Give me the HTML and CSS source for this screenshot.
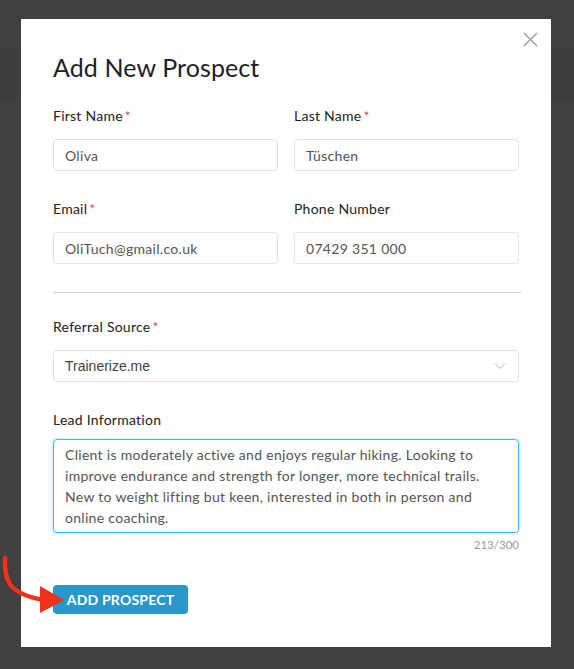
FILE: index.html
```html
<!DOCTYPE html>
<html lang="en">
<head>
<meta charset="utf-8">
<title>Add New Prospect</title>
<link rel="stylesheet" href="styles.css">
</head>
<body>
<div class="modal">
  <button class="close" aria-label="Close">
    <svg width="15" height="15" viewBox="0 0 15 15"><path d="M1 1L14 14M14 1L1 14" stroke="#9a9a9a" stroke-width="1.4" fill="none"/></svg>
  </button>
  <h1 class="title">Add New Prospect</h1>
  <div class="grid">
    <div class="field">
      <label class="label">First Name<span class="req">*</span></label>
      <div class="input">Oliva</div>
    </div>
    <div class="field">
      <label class="label">Last Name<span class="req">*</span></label>
      <div class="input">Tüschen</div>
    </div>
    <div class="field">
      <label class="label">Email<span class="req">*</span></label>
      <div class="input">OliTuch@gmail.co.uk</div>
    </div>
    <div class="field">
      <label class="label">Phone Number</label>
      <div class="input">07429 351 000</div>
    </div>
  </div>
  <hr class="divider">
  <div class="field">
    <label class="label">Referral Source<span class="req">*</span></label>
    <div class="input select">
      <span>Trainerize.me</span>
      <svg width="12" height="8" viewBox="0 0 12 8"><path d="M1 1.5L6 6.5L11 1.5" stroke="#b5b5b5" stroke-width="1" fill="none"/></svg>
    </div>
  </div>
  <div class="field lead">
    <label class="label">Lead Information</label>
    <div class="textarea">Client is moderately active and enjoys regular hiking. Looking to improve endurance and strength for longer, more technical trails. New to weight lifting but keen, interested in both in person and online coaching.</div>
    <div class="counter">213/300</div>
  </div>
  <button class="submit">ADD PROSPECT</button>
</div>
<svg class="arrow" width="70" height="80" viewBox="0 0 70 80">
  <path d="M5 8 C4 30 8 44 44 50" stroke="#f0321a" stroke-width="4.5" fill="none" stroke-linecap="round"/>
  <path d="M40 36 L64 50 L40 63 Z" fill="#f0321a"/>
</svg>
</body>
</html>
```
FILE: styles.css
```css
* { box-sizing: border-box; }
html, body { margin: 0; padding: 0; }
body {
  width: 574px;
  height: 669px;
  overflow: hidden;
  position: relative;
  background: linear-gradient(#404040 0, #404040 50px, #3c3e40 50px, #3c3e40 100px, #404040 100px);
  font-family: "Lato", "Open Sans", sans-serif;
  padding: 19px 0 0 21px;
}
.modal {
  position: relative;
  width: 530px;
  height: 628px;
  background: #fff;
  padding: 32px 32px 0 32px;
}
.close {
  position: absolute;
  top: 13px;
  right: 13px;
  width: 15px;
  height: 15px;
  padding: 0;
  border: 0;
  background: none;
  display: flex;
}
.title {
  margin: 0 0 23px 0;
  font-size: 25px;
  line-height: 32px;
  font-weight: 400;
  color: #1e1e1e;
  letter-spacing: 0.1px;
}
.grid {
  display: grid;
  grid-template-columns: 225px 225px;
  column-gap: 16px;
  row-gap: 28px;
}
.label {
  display: block;
  font-size: 14px;
  line-height: 20px;
  color: #222;
  margin-bottom: 13px;
  letter-spacing: 0.25px;
}
.req { color: #e5484d; margin-left: 2px; }
.input {
  height: 32px;
  border: 1px solid #e2e2e2;
  border-radius: 4px;
  padding: 0 11px;
  display: flex;
  align-items: center;
  font-size: 14px;
  color: #555;
  letter-spacing: 0.3px;
}
.divider {
  margin: 28px 0 24px 0;
  border: 0;
  border-top: 1px solid #cfcfcf;
  width: 468px;
}
.select {
  width: 466px;
  justify-content: space-between;
  font-family: "Liberation Sans", Arial, sans-serif;
  color: #444;
  padding-right: 12px;
  letter-spacing: 0;
}
.lead { margin-top: 28px; }
.lead .label { margin-bottom: 9px; }
.textarea {
  width: 466px;
  height: 94px;
  border: 1px solid #3fb6ef;
  border-radius: 4px;
  box-shadow: 0 0 3px rgba(63, 182, 239, 0.45);
  padding: 4px 11px;
  font-size: 14px;
  line-height: 21px;
  color: #555;
  letter-spacing: 0.3px;
}
.counter {
  width: 466px;
  text-align: right;
  font-size: 11.5px;
  line-height: 14px;
  color: #999;
  margin-top: 5px;
}
.submit {
  display: block;
  margin-top: 33px;
  width: 135px;
  height: 29px;
  border: 0;
  border-radius: 4px;
  background: #2a97cc;
  color: #fff;
  font-family: "Lato", sans-serif;
  font-weight: 700;
  font-size: 14px;
  letter-spacing: 0.2px;
  padding: 0;
}
.arrow {
  position: absolute;
  left: 0;
  top: 550px;
}
```
